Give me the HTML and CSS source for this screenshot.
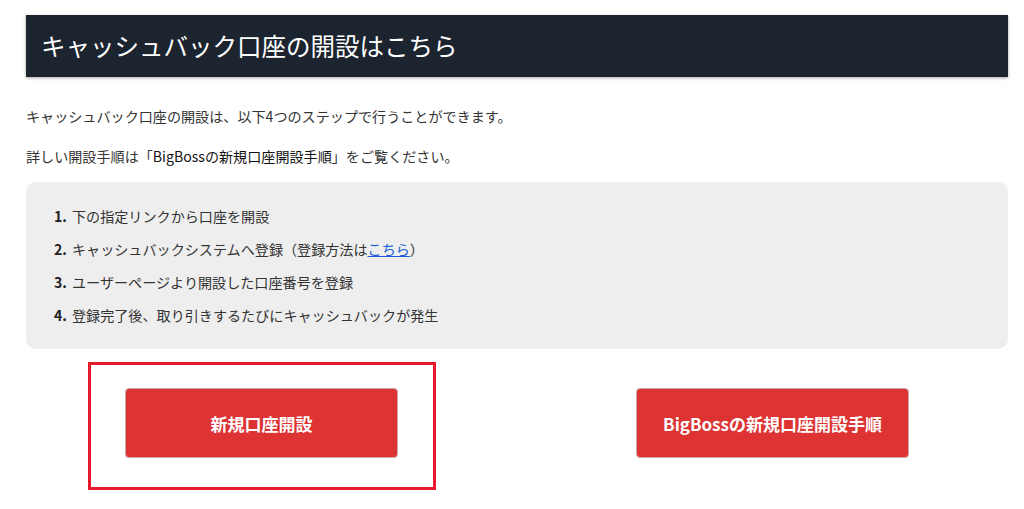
FILE: index.html
```html
<!DOCTYPE html>
<html lang="ja">
<head>
<meta charset="utf-8">
<link rel="stylesheet" href="styles.css">
</head>
<body>
<div class="page">
  <h2 class="heading">キャッシュバック口座の開設はこちら</h2>
  <p class="lead first">キャッシュバック口座の開設は、以下4つのステップで行うことができます。</p>
  <p class="lead">詳しい開設手順は「<strong>BigBossの新規口座開設手順</strong>」をご覧ください。</p>
  <div class="steps">
    <ol>
      <li>下の指定リンクから口座を開設</li>
      <li>キャッシュバックシステムへ登録（登録方法は<a href="#">こちら</a>）</li>
      <li>ユーザーページより開設した口座番号を登録</li>
      <li>登録完了後、取り引きするたびにキャッシュバックが発生</li>
    </ol>
  </div>
  <div class="buttons">
    <div class="col">
      <div class="highlight"></div>
      <a class="btn" href="#">新規口座開設</a>
    </div>
    <div class="col">
      <a class="btn" href="#">BigBossの新規口座開設手順</a>
    </div>
  </div>
</div>
</body>
</html>
```
FILE: styles.css
```css
html, body {
  margin: 0;
  padding: 0;
  background: #ffffff;
}
body {
  font-family: "Noto Sans CJK JP", "Noto Sans", sans-serif;
  color: #333333;
  font-size: 14.1px;
}
.page {
  width: 982px;
  margin-left: 26px;
  padding-top: 15px;
  padding-bottom: 48px;
}
.heading {
  margin: 0;
  height: 62px;
  box-sizing: border-box;
  background: #1c2430;
  color: #ffffff;
  font-weight: 400;
  font-size: 24.5px;
  line-height: 62px;
  padding-left: 15px;
  box-shadow: 0 1px 3px rgba(0,0,0,0.35);
}
.lead {
  margin: 15px 0 0;
  line-height: 25px;
}
.lead.first {
  margin-top: 27px;
}
.lead strong {
  font-weight: 400;
  color: #111;
}
.steps {
  margin-top: 13px;
  background: #eeeeee;
  border-radius: 10px;
  padding: 18px 0 17px;
}
.steps ol {
  margin: 0;
  padding-left: 44px;
}
.steps li {
  line-height: 33px;
  padding-left: 2px;
}
.steps li::marker {
  font-weight: 700;
  color: #222;
}
.steps a {
  color: #1a5fd6;
  text-decoration: underline;
}
.buttons {
  display: grid;
  grid-template-columns: 471px 471px;
  column-gap: 40px;
  margin-top: 39px;
}
.col {
  position: relative;
  display: flex;
  justify-content: center;
}
.btn {
  display: flex;
  align-items: center;
  justify-content: center;
  width: 273px;
  height: 70px;
  box-sizing: border-box;
  background: #dd3333;
  border: 1px solid #c9a9a9;
  border-radius: 4px;
  color: #ffffff;
  font-weight: 700;
  font-size: 17px;
  text-decoration: none;
}
.highlight {
  position: absolute;
  left: 62px;
  top: -26px;
  width: 348px;
  height: 128px;
  box-sizing: border-box;
  border: 3px solid #e8192c;
  pointer-events: none;
}
```
